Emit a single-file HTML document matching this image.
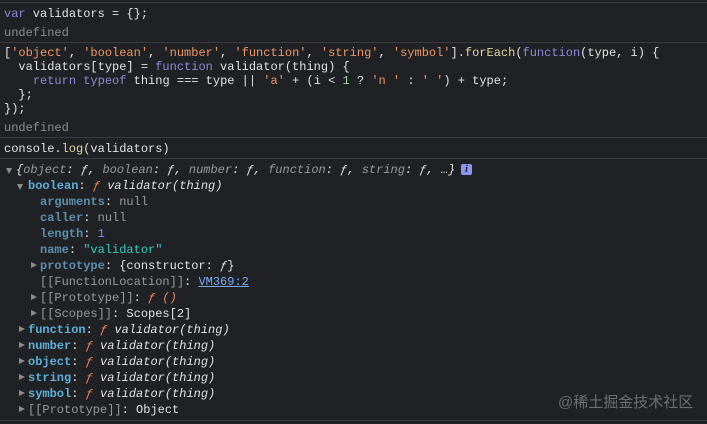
<!DOCTYPE html>
<html><head><meta charset="utf-8"><style>
html,body{margin:0;padding:0}
body{width:707px;height:424px;background:#202124;overflow:hidden;position:relative;font-family:"Liberation Mono",monospace;font-size:12px;color:#e3e3e3}
.l{position:absolute;left:0;height:16px;line-height:16px;white-space:pre}
.sep{position:absolute;left:0;width:707px;height:1px;background:#3a3b3e}
.kw{color:#8f8bd9}.s{color:#f29766}.n{color:#9ed2a0}.fn{color:#dfd8a0}.g{color:#8d8d8d}
.k{color:#5db0d7;font-weight:bold}.kd{color:#5b8fae;font-weight:bold}.num{color:#9980ff}.str{color:#35cdbf}
.f{color:#f28b54;font-style:italic}.i{font-style:italic}.d{color:#9a9a9a}
.lnk{color:#7cacf8;text-decoration:underline}
.ar{position:absolute;width:0;height:0}
.ad{border-left:3.5px solid transparent;border-right:3.5px solid transparent;border-top:6px solid #8c8c8c}
.arr{border-top:3.5px solid transparent;border-bottom:3.5px solid transparent;border-left:6px solid #8c8c8c}
</style></head><body>
<div class="sep" style="top:2px"></div>
<div class="l" style="top:6px;left:4px"><span class="kw">var</span> validators = {};</div>
<div class="l g" style="top:25px;left:4px">undefined</div>
<div class="sep" style="top:42px"></div>
<div class="l" style="top:45px;left:4px">[<span class="s">'object'</span>, <span class="s">'boolean'</span>, <span class="s">'number'</span>, <span class="s">'function'</span>, <span class="s">'string'</span>, <span class="s">'symbol'</span>].<span class="fn">forEach</span>(<span class="kw">function</span>(type, i) {</div>
<div class="l" style="top:59px;left:4px">  validators[type] = <span class="kw">function</span> validator(thing) {</div>
<div class="l" style="top:73px;left:4px">    <span class="kw">return</span> <span class="kw">typeof</span> thing === type || <span class="s">'a'</span> + (i &lt; <span class="n">1</span> ? <span class="s">'n '</span> : <span class="s">' '</span>) + type;</div>
<div class="l" style="top:87px;left:4px">  };</div>
<div class="l" style="top:101px;left:4px">});</div>
<div class="l g" style="top:120px;left:4px">undefined</div>
<div class="sep" style="top:137px"></div>
<div class="l" style="top:141px;left:4px">console.<span class="fn">log</span>(validators)</div>
<div class="sep" style="top:158px"></div>
<div class="ar ad" style="left:6px;top:168px"></div>
<div class="l i" style="top:162px;left:16px">{<span class="d">object</span>: ƒ, <span class="d">boolean</span>: ƒ, <span class="d">number</span>: ƒ, <span class="d">function</span>: ƒ, <span class="d">string</span>: ƒ, …}</div>
<div style="position:absolute;left:461px;top:164px;width:11px;height:11px;background:#8c95f0;border-radius:2px;color:#202124;font-size:10px;line-height:11px;text-align:center;font-style:italic;font-weight:bold;font-family:'Liberation Serif',serif">i</div>
<div class="ar ad" style="left:17px;top:184px"></div>
<div class="l" style="top:178px;left:28px"><span class="k">boolean</span>: <span class="f">ƒ</span> <span class="i">validator(thing)</span></div>
<div class="l" style="top:194px;left:40px"><span class="kd">arguments</span>: <span class="d">null</span></div>
<div class="l" style="top:210px;left:40px"><span class="kd">caller</span>: <span class="d">null</span></div>
<div class="l" style="top:226px;left:40px"><span class="kd">length</span>: <span class="num">1</span></div>
<div class="l" style="top:242px;left:40px"><span class="kd">name</span>: <span class="str">"validator"</span></div>
<div class="ar arr" style="left:31px;top:262px"></div>
<div class="l" style="top:258px;left:40px"><span class="kd">prototype</span>: {constructor: <span class="i">ƒ</span>}</div>
<div class="l" style="top:274px;left:40px"><span class="d">[[FunctionLocation]]</span>: <span class="lnk">VM369:2</span></div>
<div class="ar arr" style="left:31px;top:294px"></div>
<div class="l" style="top:290px;left:40px"><span class="d">[[Prototype]]</span>: <span class="f">ƒ ()</span></div>
<div class="ar arr" style="left:31px;top:310px"></div>
<div class="l" style="top:306px;left:40px"><span class="d">[[Scopes]]</span>: Scopes[2]</div>
<div class="ar arr" style="left:19px;top:326px"></div>
<div class="l" style="top:322px;left:28px"><span class="k">function</span>: <span class="f">ƒ</span> <span class="i">validator(thing)</span></div>
<div class="ar arr" style="left:19px;top:342px"></div>
<div class="l" style="top:338px;left:28px"><span class="k">number</span>: <span class="f">ƒ</span> <span class="i">validator(thing)</span></div>
<div class="ar arr" style="left:19px;top:358px"></div>
<div class="l" style="top:354px;left:28px"><span class="k">object</span>: <span class="f">ƒ</span> <span class="i">validator(thing)</span></div>
<div class="ar arr" style="left:19px;top:374px"></div>
<div class="l" style="top:370px;left:28px"><span class="k">string</span>: <span class="f">ƒ</span> <span class="i">validator(thing)</span></div>
<div class="ar arr" style="left:19px;top:390px"></div>
<div class="l" style="top:386px;left:28px"><span class="k">symbol</span>: <span class="f">ƒ</span> <span class="i">validator(thing)</span></div>
<div class="ar arr" style="left:19px;top:406px"></div>
<div class="l" style="top:402px;left:28px"><span class="d">[[Prototype]]</span>: Object</div>
<div class="sep" style="top:420px"></div>
<div style="position:absolute;left:558px;top:391px;font-family:'Liberation Sans','Noto Sans CJK SC',sans-serif;font-size:15px;color:#6e6e6e;white-space:nowrap">@稀土掘金技术社区</div>
</body></html>
